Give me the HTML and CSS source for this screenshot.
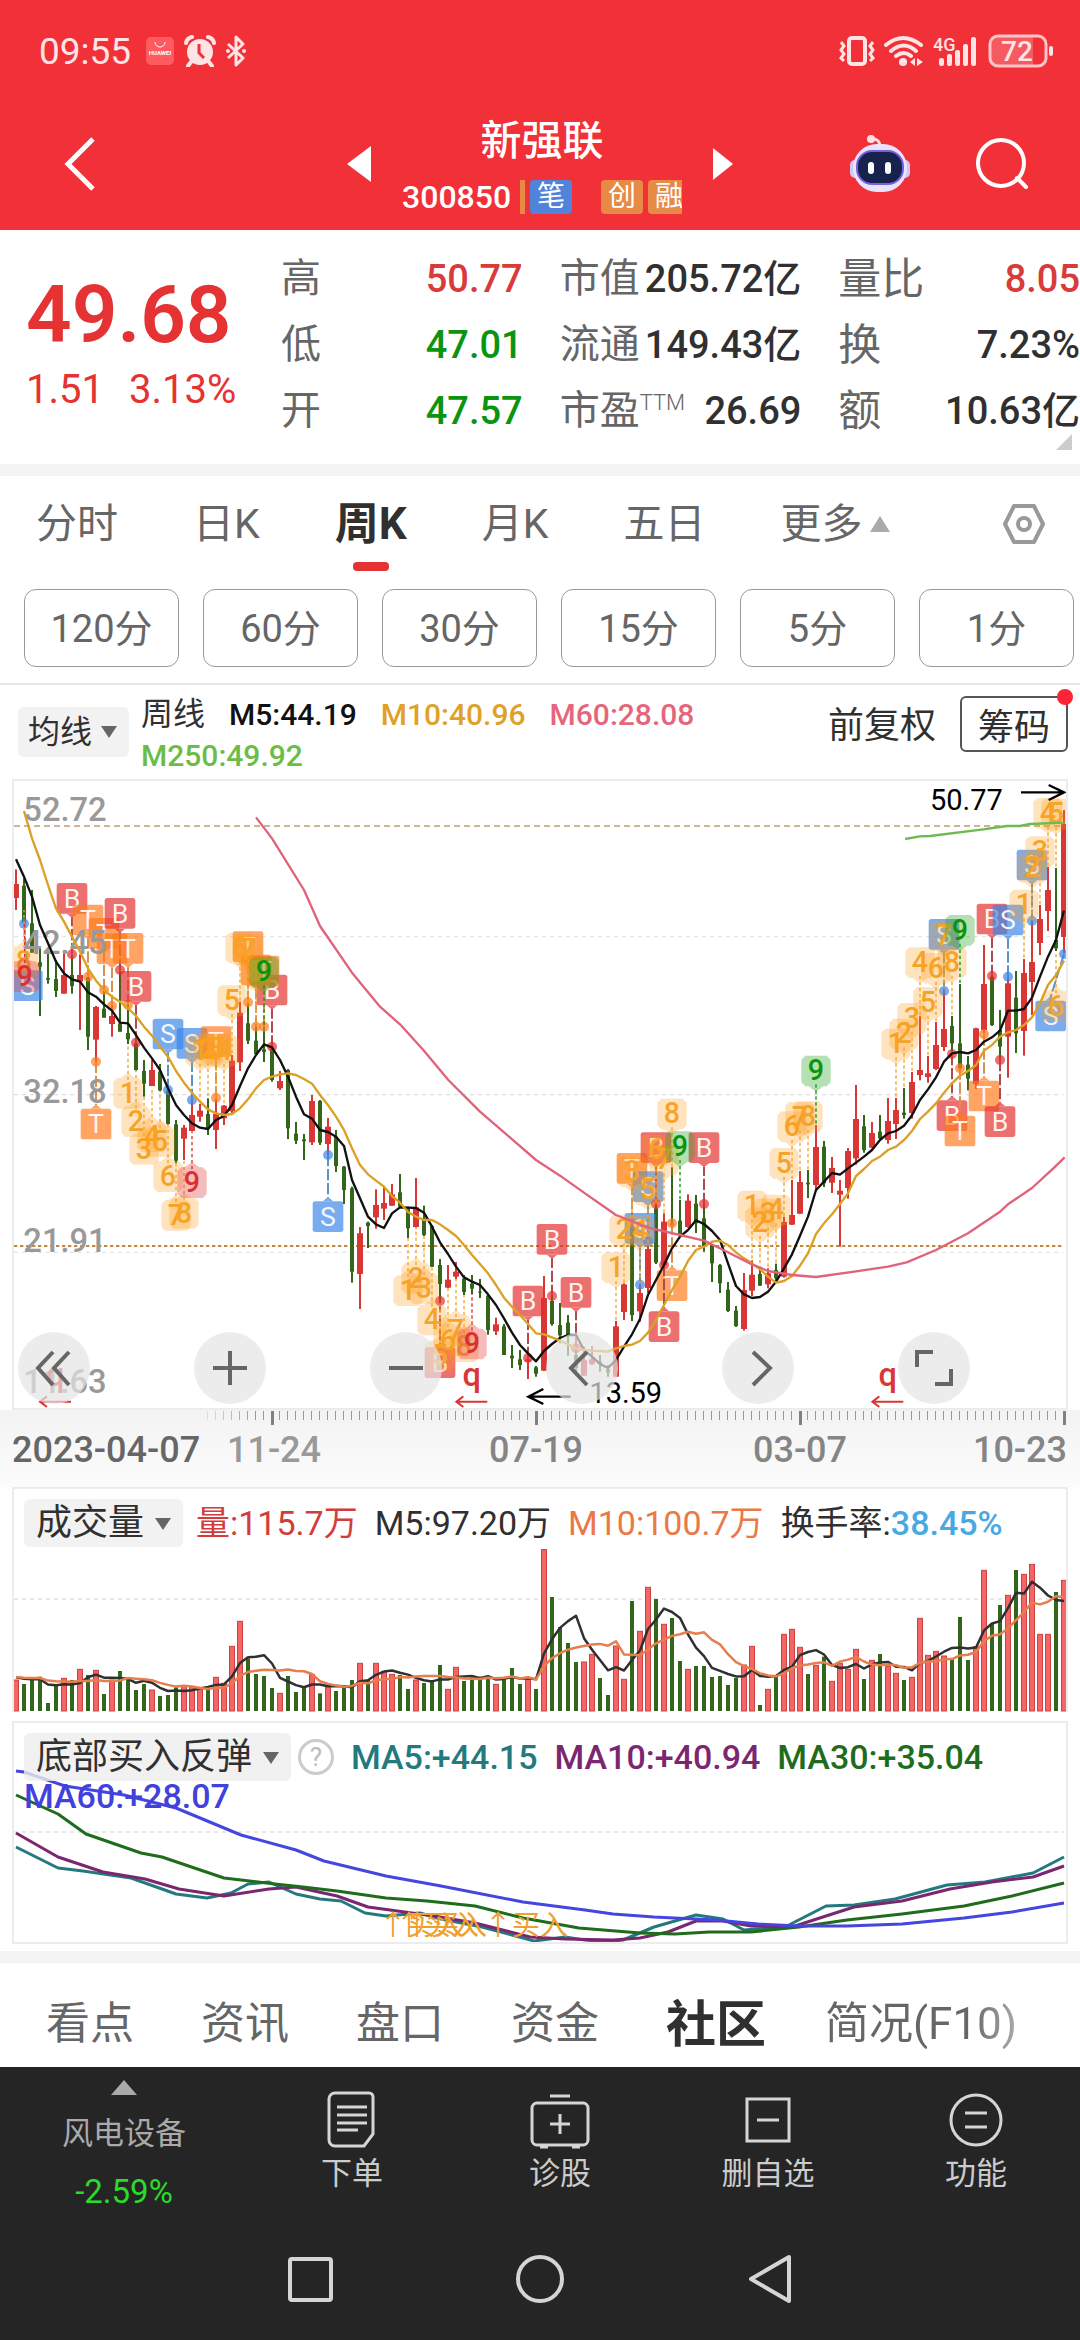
FILE: index.html
```html
<!DOCTYPE html>
<html lang="zh-CN">

<head>
    <meta charset="UTF-8" />
    <meta name="viewport" content="width=device-width, initial-scale=1.0" />
    <meta name="theme-color" content="#f13038" />
    <title>新强联 300850</title>
    <link rel="stylesheet" href="styles.css">
</head>

<body>
    <header class="header">
        <div class="status-bar">
            <span class="clock">09:55</span>
            <svg class="app-icon" width="28" height="28" viewBox="0 0 28 28">
                <rect width="28" height="28" rx="5" fill="#ff5a5f" />
                <path d="M9 5a5 5 0 0 0 10 0" fill="none" stroke="#fff" />
                <text x="14" y="18" font-size="6" font-weight="700" text-anchor="middle" fill="#fff">HUAWEI</text>
            </svg>
            <svg class="alarm-icon" width="32" height="32" viewBox="0 0 32 32">
                <circle cx="16" cy="17" r="13" fill="#ffe4e5" />
                <path d="M2 8q1-5 6-6M30 8q-1-5-6-6M7 27l-3 4M25 27l3 4" stroke="#ffe4e5" stroke-width="4" fill="none" stroke-linecap="round" />
                <path d="M15 9v9l5 5" stroke="#f13038" stroke-width="3" fill="none" />
            </svg>
            <svg class="bt-icon" width="20" height="32" viewBox="0 0 20 32">
                <path d="M2 9l15 14-7 7V2l7 7L2 23" fill="none" stroke="#ffe4e5" stroke-width="3" stroke-linejoin="round" />
                <circle cx="2" cy="16" r="2" fill="#ffe4e5" />
                <circle cx="18" cy="16" r="2" fill="#ffe4e5" />
            </svg>
            <div class="status-right">
                <svg width="36" height="32" viewBox="0 0 36 32" fill="none" stroke="#ffe4e5">
                    <rect x="10" y="3" width="16" height="26" rx="3" stroke-width="4" />
                    <path d="M2 7l3 4-3 4 3 4-3 4 3 3M34 7l-3 4 3 4-3 4 3 4-3 3" stroke-width="3" />
                </svg>
                <svg width="40" height="32" viewBox="0 0 40 32" fill="none" stroke="#ffe4e5" stroke-width="4">
                    <path d="M2 10q17-14 35 0M7 16q13-11 25 0M12 21q8-6 15 0" stroke-linecap="round" />
                    <circle cx="19" cy="27" r="4" fill="#ffe4e5" stroke="none" />
                    <path d="M31 23v8l-5-4zM33 23v8l6-4z" fill="#ffe4e5" stroke="none" />
                </svg>
                <svg width="46" height="32" viewBox="0 0 46 32" fill="#ffe4e5">
                    <text x="0" y="16" font-size="18" font-weight="500">4G</text>
                    <rect x="6" y="23" width="5" height="8" rx="2" />
                    <rect x="14" y="19" width="5" height="12" rx="2" />
                    <rect x="22" y="15" width="5" height="16" rx="2" />
                    <rect x="30" y="9" width="5" height="22" rx="2" />
                    <rect x="38" y="2" width="5" height="29" rx="2" />
                </svg>
                <svg width="66" height="34" viewBox="0 0 66 34">
                    <path d="M8 3h37v28H8a5 5 0 0 1-5-5V8a5 5 0 0 1 5-5z" fill="#f55a61" />
                    <rect x="2" y="2" width="56" height="30" rx="8" fill="none" stroke="#ffc4c7" stroke-width="3" />
                    <rect x="61" y="12" width="4" height="10" rx="2" fill="#ffe4e5" />
                    <text x="29" y="27" font-size="28" font-weight="500" text-anchor="middle" fill="#ffe4e5">72</text>
                </svg>
            </div>
        </div>

        <div class="title-bar">
            <button class="icon-btn back" aria-label="返回">
                <svg width="36" height="60" viewBox="0 0 36 60"><path d="M31 5L6 30l25 25" fill="none" stroke="#fff" stroke-width="5" /></svg>
            </button>
            <div class="stock">
                <button class="icon-btn" aria-label="上一只">
                    <svg width="24" height="36" viewBox="0 0 24 36"><path d="M24 0v36L0 18z" fill="#fff" /></svg>
                </button>
                <div class="stock-title">
                    <h1>新强联</h1>
                    <div class="stock-code">
                        <span>300850</span>
                        <i class="tag-edge"></i>
                        <span class="tag tag-blue">笔</span>
                        <span class="tag tag-next">创</span>
                        <span class="tag">融</span>
                    </div>
                </div>
                <button class="icon-btn" aria-label="下一只">
                    <svg width="20" height="32" viewBox="0 0 20 32"><path d="M0 0v32l20-16z" fill="#fff" /></svg>
                </button>
            </div>
            <div class="title-actions">
                <button class="icon-btn" aria-label="智能助手">
                    <svg width="62" height="60" viewBox="0 0 62 60">
                        <path d="M22 5q9-1 9 8" fill="none" stroke="#ffdfe6" stroke-width="3" />
                        <circle cx="22" cy="5" r="4" fill="#ffdfe6" />
                        <rect x="1" y="26" width="10" height="18" rx="5" fill="#cfc8f5" />
                        <rect x="51" y="26" width="10" height="18" rx="5" fill="#cfc8f5" />
                        <rect x="4" y="10" width="54" height="48" rx="24" fill="#e9e4fb" />
                        <rect x="8" y="17" width="46" height="33" rx="15" fill="#17234d" stroke="#7a5fe0" stroke-width="2" />
                        <rect x="19" y="28" width="6" height="12" rx="3" fill="#fff" />
                        <rect x="36" y="28" width="6" height="12" rx="3" fill="#fff" />
                    </svg>
                </button>
                <button class="icon-btn" aria-label="搜索">
                    <svg width="54" height="54" viewBox="0 0 54 54" fill="none" stroke="#fff" stroke-width="4">
                        <circle cx="26" cy="26" r="23" />
                        <path d="M42 41l9 9" stroke-linecap="round" />
                    </svg>
                </button>
            </div>
        </div>
    </header>

    <main>
        <section class="quote">
            <div class="quote-main">
                <div class="price">49.68</div>
                <div class="change"><span>1.51</span><span>3.13%</span></div>
            </div>
            <dl class="quote-col">
                <div><dt>高</dt><dd class="up">50.77</dd></div>
                <div><dt>低</dt><dd class="down">47.01</dd></div>
                <div><dt>开</dt><dd class="down">47.57</dd></div>
            </dl>
            <dl class="quote-col">
                <div><dt>市值</dt><dd>205.72亿</dd></div>
                <div><dt>流通</dt><dd>149.43亿</dd></div>
                <div><dt>市盈<sup>TTM</sup></dt><dd>26.69</dd></div>
            </dl>
            <dl class="quote-col wide-label">
                <div><dt>量比</dt><dd class="up">8.05</dd></div>
                <div><dt>换</dt><dd>7.23%</dd></div>
                <div><dt>额</dt><dd>10.63亿</dd></div>
            </dl>
        </section>

        <nav class="k-tabs">
            <button>分时</button>
            <button>日K</button>
            <button class="active">周K</button>
            <button>月K</button>
            <button>五日</button>
            <button class="more">更多</button>
            <button class="icon-btn k-setting" aria-label="设置">
                <svg width="44" height="42" viewBox="0 0 44 42" fill="none" stroke="#999" stroke-width="4" stroke-linejoin="round">
                    <path d="M12 3h20l9 18-9 18H12L3 21z" />
                    <circle cx="22" cy="21" r="6" />
                </svg>
            </button>
        </nav>

        <div class="periods">
            <button>120分</button>
            <button>60分</button>
            <button>30分</button>
            <button>15分</button>
            <button>5分</button>
            <button>1分</button>
        </div>

        <div class="ma-bar">
            <span class="picker picker-small"><select aria-label="主图指标"><option>均线</option></select></span>
            <div class="ma-legend">
                <span>周线</span>
                <span class="c-black">M5:44.19</span>
                <span class="c-yellow">M10:40.96</span>
                <span class="c-pink">M60:28.08</span>
                <span class="c-green">M250:49.92</span>
            </div>
            <div class="ma-actions">
                <button>前复权</button>
                <button class="chips">筹码</button>
            </div>
        </div>

        <section class="panel k-panel">
            <svg id="kChart" viewBox="42 33 3156 1881"></svg>
            <div class="k-controls">
                <button aria-label="最早"><svg viewBox="0 0 72 72"><path d="M35 20L20 36l15 17M51 20L36 36l15 17" /></svg></button>
                <button aria-label="放大"><svg viewBox="0 0 72 72"><path d="M36 19v34M19 36h34" /></svg></button>
                <button aria-label="缩小"><svg viewBox="0 0 72 72"><path d="M19 36h34" /></svg></button>
                <button aria-label="左移"><svg viewBox="0 0 72 72"><path d="M41 20L25 36l16 17" /></svg></button>
                <button aria-label="右移"><svg viewBox="0 0 72 72"><path d="M31 20l17 16-17 17" /></svg></button>
                <button aria-label="全屏"><svg viewBox="0 0 72 72"><path d="M19 35V20h16M53 37v15H37" /></svg></button>
            </div>
        </section>
        <svg id="axis" class="axis" viewBox="12 0 1056 77"></svg>

        <section class="panel vol-panel">
            <div class="sub-legend">
                <span class="picker"><select aria-label="副图指标一"><option>成交量</option></select></span>
                <span class="c-red">量:115.7万</span>
                <span>M5:97.20万</span>
                <span class="c-orange">M10:100.7万</span>
                <span>换手率:<b>38.45%</b></span>
            </div>
            <svg id="volChart" viewBox="14 1549 1052 163"></svg>
        </section>

        <section class="panel ma-panel">
            <svg id="maChart" viewBox="14 14 1052 219"></svg>
            <div class="sub-legend">
                <span class="picker"><select aria-label="副图指标二"><option>底部买入反弹</option></select></span>
                <button class="help" aria-label="说明">?</button>
                <span class="c-teal">MA5:+44.15</span>
                <span class="c-purple">MA10:+40.94</span>
                <span class="c-dark-green">MA30:+35.04</span>
                <span class="c-blue">MA60:+28.07</span>
            </div>
        </section>

        <nav class="info-tabs">
            <button>看点</button>
            <button>资讯</button>
            <button>盘口</button>
            <button>资金</button>
            <button class="active">社区</button>
            <button class="fade">简况(F10)</button>
        </nav>
    </main>

    <footer class="footer">
        <div class="actions">
            <button class="industry">
                <span>风电设备</span>
                <span class="industry-rate">-2.59%</span>
            </button>
            <button>
                <svg viewBox="0 0 60 60"><path d="M13 4h34a4 4 0 0 1 4 4v37L42 57H13a6 6 0 0 1-6-6V10a6 6 0 0 1 6-6zM15 18h30M15 26h30M15 34h30M15 41h21" /></svg>
                <span>下单</span>
            </button>
            <button>
                <svg viewBox="0 0 60 60"><rect x="2" y="14" width="56" height="42" rx="5" /><path d="M20 7h20M30 25v20M20 35h20M10 58h8M42 58h8" /></svg>
                <span>诊股</span>
            </button>
            <button>
                <svg viewBox="0 0 60 60"><rect x="9" y="10" width="42" height="42" /><path d="M19 31h22" /></svg>
                <span>删自选</span>
            </button>
            <button>
                <svg viewBox="0 0 60 60"><circle cx="30" cy="31" r="25" /><path d="M19 24h22M19 38h22" /></svg>
                <span>功能</span>
            </button>
        </div>
        <div class="system-nav">
            <button aria-label="最近任务"><svg viewBox="0 0 54 54"><rect x="7" y="7" width="41" height="41" rx="2" /></svg></button>
            <button aria-label="主屏幕"><svg viewBox="0 0 54 54"><circle cx="27" cy="27" r="22" /></svg></button>
            <button aria-label="返回上一级"><svg viewBox="0 0 54 54"><path d="M46 5v44L8 27z" /></svg></button>
        </div>
    </footer>

    <script src="chart.js"></script>
</body>

</html>
```
FILE: styles.css
```css
* {
    box-sizing: border-box;
}

body {
    margin: 0;
    background: #252525;
    color: #303030;
    font-family: Roboto, "Noto Sans CJK SC", sans-serif;
}

main {
    background: #fff;
}

button,
select {
    margin: 0;
    padding: 0;
    border: none;
    background: none;
    color: inherit;
    font: inherit;
}

svg {
    display: block;
}

.icon-btn {
    display: flex;
}

/* header */
.header {
    height: 230px;
    background: #f13038;
    color: #fff;
}

.status-bar {
    display: flex;
    align-items: center;
    height: 102px;
    padding: 0 26px 0 39px;
}

.clock {
    margin-right: 15px;
    color: #ffe4e5;
    font-size: 37px;
}

.alarm-icon,
.bt-icon {
    margin-left: 10px;
}

.status-right {
    display: flex;
    align-items: center;
    gap: 9px;
    margin-left: auto;
}

.title-bar {
    display: grid;
    grid-template-columns: 1fr auto 1fr;
    align-items: center;
    height: 124px;
}

.back {
    margin-left: 62px;
}

.stock {
    display: flex;
    align-items: center;
    gap: 31px;
}

.stock-title {
    width: 280px;
    overflow: hidden;
}

.stock-title h1 {
    margin: 0;
    font-size: 41px;
    font-weight: 500;
    line-height: 66px;
    text-align: center;
}

.stock-code {
    display: flex;
    align-items: center;
    height: 46px;
    font-size: 32px;
    font-weight: 500;
}

.tag-edge {
    flex: none;
    width: 5px;
    height: 34px;
    margin: 0 5px 0 9px;
    background: #e68a45;
}

.tag {
    flex: none;
    width: 42px;
    margin-right: 5px;
    border-radius: 4px;
    background: #e68a45;
    font-size: 28px;
    font-weight: 400;
    line-height: 34px;
    text-align: center;
}

.tag-blue {
    background: #5083d9;
}

.tag-next {
    margin-left: 24px;
}

.title-actions {
    display: flex;
    align-items: center;
    justify-content: flex-end;
    gap: 64px;
    padding-right: 51px;
}

/* quote */
.quote {
    position: relative;
    display: grid;
    grid-template-columns: 218px 1fr 1fr 1fr;
    column-gap: 37px;
    padding: 16px 0 20px 26px;
    border-bottom: 12px solid #f4f4f4;
}

.quote::after {
    content: "";
    position: absolute;
    right: 8px;
    bottom: 14px;
    border: 8px solid #ccc;
    border-top-color: transparent;
    border-left-color: transparent;
}

.quote-main {
    padding-top: 25px;
    color: #e53232;
    white-space: nowrap;
}

.price {
    font-size: 80px;
    font-weight: 600;
    line-height: 88px;
}

.change {
    display: flex;
    gap: 25px;
    font-size: 40px;
    line-height: 62px;
}

.quote-col {
    margin: 0;
    font-size: 38px;
    font-weight: 500;
    line-height: 66px;
}

.quote-col div {
    display: flex;
    justify-content: space-between;
    height: 66px;
    white-space: nowrap;
}

.quote-col dt {
    color: #666;
    font-size: 40px;
    font-weight: 400;
}

.wide-label dt {
    font-size: 43px;
}

.quote-col dd {
    margin: 0;
}

.quote-col sup {
    font-size: 22px;
    font-weight: 300;
    line-height: 0;
    vertical-align: 14px;
}

.up {
    color: #d93a3a;
}

.down {
    color: #0a9410;
}

/* k line tabs */
.k-tabs {
    display: flex;
    gap: 75px;
    height: 113px;
    padding: 24px 34px 0 36px;
    color: #666;
    font-size: 41px;
    line-height: 48px;
    white-space: nowrap;
}

.k-tabs button {
    height: 48px;
}

.k-tabs .active {
    position: relative;
    color: #303030;
    font-size: 44px;
    font-weight: 700;
}

.k-tabs .active::after {
    content: "";
    position: absolute;
    left: 50%;
    bottom: -23px;
    width: 36px;
    height: 9px;
    margin-left: -18px;
    border-radius: 4px;
    background: #e53232;
}

.more::after {
    content: "";
    display: inline-block;
    margin-left: 8px;
    border: 10px solid transparent;
    border-top: none;
    border-bottom: 16px solid #aaa;
    vertical-align: 6px;
}

.k-setting {
    align-items: center;
    margin-left: auto;
}

.periods {
    display: grid;
    grid-template-columns: repeat(6, 1fr);
    gap: 24px;
    padding: 0 6px 16px 24px;
    border-bottom: 2px solid #e8e8e8;
}

.periods button {
    height: 78px;
    padding-bottom: 5px;
    border: 1px solid #999;
    border-radius: 12px;
    color: #666;
    font-size: 38px;
}

.ma-bar {
    display: flex;
    align-items: center;
    height: 94px;
    padding: 0 12px 0 18px;
}

.picker {
    position: relative;
    display: inline-block;
}

.picker select {
    display: block;
    height: 48px;
    padding: 0 38px 0 12px;
    border-radius: 6px;
    background: #f2f2f2;
    font-size: 36px;
    appearance: none;
}

.picker::after {
    content: "";
    position: absolute;
    top: 19px;
    right: 12px;
    border: 8px solid transparent;
    border-top: 12px solid #666;
    border-bottom: none;
}

.picker-small select {
    height: 50px;
    padding-left: 10px;
    padding-right: 36px;
    font-size: 32px;
}

.ma-legend {
    flex: 1;
    display: flex;
    flex-wrap: wrap;
    column-gap: 24px;
    margin-left: 12px;
    padding-top: 5px;
    font-size: 30px;
    font-weight: 500;
    line-height: 41px;
}

.ma-legend span:first-child {
    font-size: 32px;
    font-weight: 400;
}

.ma-actions {
    display: flex;
    align-items: center;
    align-self: flex-start;
    gap: 24px;
    padding-top: 11px;
    font-size: 36px;
}

.ma-actions button {
    padding-bottom: 4px;
}

.chips {
    position: relative;
    width: 108px;
    height: 56px;
    border: 2px solid #555;
    border-radius: 6px;
}

.chips::after {
    content: "";
    position: absolute;
    top: -9px;
    right: -7px;
    width: 16px;
    height: 16px;
    border-radius: 50%;
    background: #ff2336;
}

/* charts */
.panel {
    position: relative;
    margin: 0 12px;
    border: 2px solid #ececec;
}

.panel > svg,
.axis {
    width: 100%;
    height: auto;
}

.k-controls {
    position: absolute;
    left: 4px;
    bottom: 4px;
    display: flex;
    gap: 104px;
}

.k-controls button {
    width: 72px;
    height: 72px;
    border-radius: 50%;
    background: rgba(228, 228, 228, 0.7);
}

.k-controls path {
    fill: none;
    stroke: #666;
    stroke-width: 4;
}

.axis {
    padding: 0 12px;
    background: linear-gradient(#f3f3f3, #fcfcfc);
}

.vol-panel {
    margin-bottom: 9px;
    border-bottom: none;
}

.sub-legend {
    display: flex;
    flex-wrap: wrap;
    align-items: center;
    column-gap: 17px;
    padding: 10px 10px 2px;
    font-size: 34px;
    line-height: 48px;
}

.sub-legend > span {
    font-weight: 500;
}

.sub-legend .picker {
    margin-right: -4px;
    font-weight: 400;
}

.sub-legend b {
    color: #48a9e2;
    font-weight: 500;
}

.vol-panel .sub-legend > span {
    font-weight: 400;
}

.ma-panel {
    display: grid;
    margin-bottom: 7px;
}

.ma-panel > * {
    grid-area: 1 / 1;
}

.ma-panel .sub-legend {
    align-content: flex-start;
    z-index: 1;
}

.ma-panel select {
    background: rgba(238, 238, 238, 0.8);
}

.ma-panel .c-blue {
    line-height: 30px;
}

.help {
    width: 36px;
    height: 36px;
    margin-left: -6px;
    border: 3px solid #ccc;
    border-radius: 50%;
    color: #bbb;
    font-size: 26px;
    line-height: 28px;
}

.c-black {
    color: #111;
}

.c-yellow {
    color: #dfa126;
}

.c-pink {
    color: #e5667a;
}

.c-green {
    color: #6cbc48;
}

.c-red {
    color: #d23c3c;
}

.c-orange {
    color: #ec7845;
}

.c-teal {
    color: #23797d;
}

.c-purple {
    color: #7b2770;
}

.c-dark-green {
    color: #1f6c1c;
}

.c-blue {
    color: #4141dc;
}

/* bottom */
.info-tabs {
    display: flex;
    align-items: center;
    gap: 67px;
    height: 116px;
    padding: 10px 0 0 46px;
    border-top: 12px solid #f4f4f4;
    color: #666;
    font-size: 44px;
    white-space: nowrap;
}

.info-tabs .active {
    margin-right: -8px;
    color: #303030;
    font-size: 50px;
    font-weight: 700;
}

.info-tabs .fade {
    background: linear-gradient(90deg, #666 75%, #aaa);
    background-clip: text;
    color: transparent;
}

.footer {
    background: #252525;
    color: #ccc;
}

.actions {
    display: grid;
    grid-template-columns: 248fr 208fr 208fr 208fr 208fr;
    height: 152px;
    font-size: 31px;
}

.actions button {
    display: flex;
    flex-direction: column;
    align-items: center;
    padding-top: 22px;
    line-height: 50px;
}

.footer svg {
    width: 60px;
    height: 60px;
    fill: none;
    stroke: #d5d5d5;
    stroke-width: 3;
}

.actions .industry {
    padding-top: 13px;
    color: #aaa;
}

.industry::before {
    content: "";
    margin-bottom: 14px;
    border: 13px solid transparent;
    border-top: none;
    border-bottom: 15px solid #aaa;
}

.industry-rate {
    margin-top: 8px;
    color: #2adb2a;
    font-size: 33px;
}

.system-nav {
    display: flex;
    justify-content: center;
    gap: 176px;
    height: 120px;
}

.system-nav button {
    display: flex;
    align-items: center;
}

.footer .system-nav svg {
    width: 54px;
    height: 54px;
    stroke-width: 4;
    stroke-linejoin: round;
}
```
FILE: chart.js
```js
const RED = '#d93636';
const GREEN = '#33651a';

// weekly candles: colour, high, body top, body bottom, low (chart units, y down)
const candles = `
r 298 342 384 420,g 325 347 460 460,g 360 460 548 548,g 537 577 590 738,g 545 624 629 641,g 570 627 663 681,
r 540 615 671 671,g 555 615 648 671,r 553 615 635 780,g 620 622 800 840,r 708 711 809 875,g 660 716 743 743,
r 708 738 762 800,g 602 760 785 785,g 705 789 808 822,g 818 820 900 902,g 870 903 941 980,r 870 900 948 948,
g 882 905 961 963,g 960 962 1062 1064,g 1050 1063 1172 1179,r 1065 1073 1106 1170,r 990 1035 1083 1085,
r 1002 1022 1040 1055,g 985 1032 1075 1095,r 985 1032 1080 1137,r 1005 1007 1045 1065,r 855 872 1024 1030,
r 695 728 877 903,g 700 760 812 822,g 770 812 852 852,g 770 838 846 876,g 830 835 930 935,r 903 933 955 960,
g 897 900 1075 1107,g 1056 1091 1112 1122,g 1092 1108 1114 1170,r 975 993 1117 1125,g 990 993 1118 1125,
r 1044 1070 1122 1155,g 1080 1100 1188 1206,g 1188 1190 1260 1302,g 1250 1255 1505 1538,r 1371 1390 1512 1617,
g 1355 1358 1368 1434,r 1258 1305 1342 1376,r 1252 1299 1316 1350,r 1242 1273 1307 1308,g 1212 1267 1310 1310,
g 1310 1315 1375 1404,r 1224 1312 1371 1373,g 1307 1345 1395 1398,g 1365 1368 1490 1491,g 1467 1485 1542 1593,
r 1485 1529 1553 1555,r 1476 1505 1520 1528,g 1515 1526 1566 1575,g 1515 1541 1556 1572,g 1527 1565 1568 1584,
g 1575 1577 1680 1694,r 1643 1663 1684 1695,g 1662 1669 1755 1755,g 1725 1757 1765 1794,g 1740 1768 1785 1800,
r 1760 1768 1774 1827,g 1788 1792 1811 1820,r 1518 1584 1802 1803,g 1578 1593 1662 1667,g 1599 1665 1696 1720,
g 1635 1658 1695 1757,g 1735 1755 1794 1815,r 1730 1770 1817 1818,r 1728 1768 1782 1785,g 1755 1775 1782 1805,
g 1785 1798 1808 1820,r 1653 1669 1820 1821,r 1540 1543 1626 1650,g 1360 1370 1635 1653,r 1545 1569 1624 1655,
r 1425 1437 1554 1570,g 1302 1315 1478 1482,r 1330 1355 1485 1487,g 1192 1360 1366 1366,g 1290 1352 1395 1396,
r 1273 1292 1371 1373,g 1275 1301 1360 1389,g 1302 1345 1430 1445,g 1425 1425 1480 1536,g 1482 1485 1540 1569,
g 1536 1559 1623 1626,g 1608 1622 1668 1671,r 1509 1560 1677 1682,r 1471 1514 1562 1578,g 1495 1512 1547 1548,
r 1495 1510 1543 1555,g 1481 1500 1525 1535,r 1340 1356 1520 1523,r 1230 1335 1364 1365,r 1203 1236 1331 1332,
g 1200 1238 1243 1284,r 1065 1131 1245 1260,g 1113 1130 1240 1251,r 1161 1194 1238 1269,r 1230 1262 1274 1430,
r 1134 1143 1254 1286,r 945 1047 1165 1184,g 1035 1069 1140 1148,r 1056 1089 1133 1135,g 1035 1085 1105 1107,
r 984 1053 1110 1121,r 984 1020 1062 1107,g 954 1028 1035 1046,r 906 936 1029 1046,r 738 900 915 931,
r 858 910 921 938,r 756 825 897 900,r 660 777 831 843,g 738 768 820 845,g 642 820 895 897,g 858 884 926 961,
r 773 775 942 957,r 525 642 780 790,g 618 620 765 768,g 720 780 830 869,r 621 640 800 923,g 603 683 790 849,
r 567 609 783 857,r 453 576 636 735,r 405 447 519 555,r 291 360 423 483,g 294 510 535 543,r 120 162 501 550`
    .trim().split(',').map(row => row.trim().split(' '));

const ma5 = [
    268, 320, 380, 465, 520, 575, 610, 628, 635, 667, 680, 703, 722, 758, 760, 795, 833, 865, 900, 955,
    1005, 1035, 1060, 1073, 1077, 1050, 1038, 1005, 948, 895, 855, 823, 832, 870, 920, 980, 1033, 1046, 1080, 1086,
    1100, 1128, 1230, 1285, 1340, 1363, 1374, 1330, 1312, 1313, 1314, 1328, 1370, 1417, 1452, 1490, 1522, 1535, 1545, 1573,
    1605, 1645, 1688, 1725, 1750, 1774, 1743, 1722, 1704, 1695, 1695, 1740, 1760, 1782, 1794, 1770, 1730, 1693, 1647, 1575,
    1530, 1485, 1435, 1400, 1380, 1351, 1362, 1383, 1410, 1480, 1548, 1573, 1584, 1581, 1565, 1535, 1495, 1453, 1397, 1340,
    1260, 1235, 1209, 1214, 1195, 1178, 1160, 1140, 1110, 1090, 1083, 1067, 1036, 990, 958, 922, 875, 850, 846, 850,
    840, 815, 802, 782, 722, 722, 717, 683, 620, 560, 510, 422
];
// starts at the second candle
const ma10 = [
    123, 205, 270, 345, 415, 455, 500, 545, 595, 632, 660, 680, 695, 715, 738, 770, 797, 830, 860,
    903, 938, 968, 995, 1018, 1030, 1035, 1032, 1015, 988, 955, 930, 920, 913, 910, 915, 927, 941, 975, 1005,
    1040, 1080, 1135, 1185, 1213, 1232, 1250, 1278, 1298, 1326, 1340, 1350, 1350, 1363, 1380, 1398, 1425, 1455, 1482, 1510,
    1545, 1583, 1610, 1635, 1662, 1690, 1693, 1702, 1712, 1723, 1735, 1740, 1742, 1743, 1745, 1735, 1728, 1724, 1713, 1688,
    1650, 1605, 1560, 1520, 1473, 1440, 1430, 1415, 1412, 1425, 1447, 1465, 1480, 1498, 1520, 1538, 1533, 1518, 1487, 1450,
    1392, 1360, 1333, 1302, 1270, 1218, 1197, 1173, 1160, 1140, 1130, 1110, 1083, 1047, 1025, 1000, 968, 940, 917, 903,
    885, 842, 825, 800, 787, 780, 765, 742, 700, 645, 615, 572
];
const ma60 = '768,142 816,205 912,360 960,468 1056,608 1140,710 1200,763 1270,840 1345,930 1440,1025 1608,1170 1680,1217 1755,1270 1848,1335 1944,1373 2040,1395 2112,1412 2170,1440 2256,1483 2304,1503 2376,1515 2448,1521 2568,1504 2664,1490 2720,1477 2808,1440 2904,1390 3000,1325 3024,1303 3096,1254 3160,1195 3194,1162';
const ma250 = '2715,207 2760,199 2790,198 2950,178 3020,168 3060,168 3090,162 3194,158';

// buy / sell / T signals: letter, badge x, badge y, dot x, dot y
const signals = [
    ['B', 216, 385, 216, 553], ['T', 264, 450, 264, 620], ['T', 312, 490, 312, 660], ['T', 336, 536, 336, 708],
    ['B', 360, 430, 360, 600], ['T', 384, 535, 384, 705], ['B', 408, 649, 408, 818], ['T', 288, 1062, 288, 875],
    ['S', 82, 647, 72, 461], ['S', 504, 792, 504, 960], ['S', 576, 820, 576, 990], ['T', 648, 815, 648, 983],
    ['T', 744, 530, 744, 697], ['B', 816, 660, 816, 830], ['T', 768, 600, 768, 770], ['T', 792, 603, 792, 770],
    ['S', 984, 1340, 984, 1155], ['B', 1320, 1778, 1320, 1593], ['B', 1584, 1593, 1584, 1764],
    ['B', 1656, 1408, 1656, 1578], ['B', 1728, 1567, 1728, 1735], ['T', 1896, 1195, 1896, 1360],
    ['S', 1920, 1375, 1920, 1544], ['S', 1944, 1250, 1944, 1415], ['B', 1968, 1133, 1968, 1302],
    ['B', 2112, 1133, 2112, 1302], ['T', 2016, 1547, 2016, 1360], ['B', 1992, 1670, 1992, 1485],
    ['S', 2832, 493, 2832, 663], ['B', 2976, 447, 2976, 618], ['S', 3024, 450, 3024, 620],
    ['S', 3096, 285, 3096, 453], ['B', 2856, 1037, 2856, 852], ['T', 2880, 1083, 2880, 895],
    ['T', 2952, 978, 2952, 793], ['B', 3000, 1055, 3000, 870], ['S', 3152, 738, 3192, 552]
];

// nine-turn counts: number, x, y, line end y, kind for the 9
const turns = [
    [8, 72, 575, 420], [9, 74, 620, 460, 'low'],
    [1, 384, 970, 822], [2, 408, 1055, 902], [3, 432, 1138, 980], [4, 456, 1100, 950], [5, 480, 1115, 963],
    [6, 504, 1220, 1064], [7, 528, 1336, 1179], [8, 552, 1330, 1170], [9, 576, 1238, 1085, 'low'],
    [1, 600, 842, 1002], [2, 624, 838, 985], [3, 648, 835, 985], [4, 672, 842, 1005], [5, 696, 692, 855],
    [6, 720, 534, 695], [7, 744, 540, 700], [8, 768, 605, 770], [9, 792, 606, 770, 'high'],
    [1, 1224, 1562, 1404], [2, 1248, 1525, 1373], [3, 1272, 1555, 1398], [4, 1296, 1650, 1491], [5, 1320, 1758, 1593],
    [6, 1344, 1712, 1555], [7, 1368, 1682, 1528], [8, 1392, 1730, 1575], [9, 1416, 1722, 1572, 'low'],
    [1, 1848, 1493, 1653], [2, 1872, 1380, 1540], [3, 1896, 1205, 1360], [4, 1920, 1383, 1545], [5, 1944, 1260, 1425],
    [6, 1968, 1140, 1302], [7, 1992, 1170, 1330], [8, 2016, 1032, 1192], [9, 2040, 1130, 1290, 'high'],
    [1, 2256, 1308, 1471], [2, 2280, 1358, 1495], [3, 2304, 1332, 1495], [4, 2328, 1320, 1481], [5, 2352, 1180, 1340],
    [6, 2376, 1070, 1230], [7, 2400, 1042, 1203], [8, 2424, 1040, 1200], [9, 2448, 903, 1065, 'high'],
    [1, 2688, 822, 984], [2, 2712, 792, 954], [3, 2736, 745, 906], [4, 2760, 578, 738], [5, 2784, 697, 858],
    [6, 2808, 595, 756], [7, 2832, 498, 660], [8, 2856, 577, 738], [9, 2880, 481, 642, 'high'],
    [1, 3072, 405, 567], [2, 3096, 293, 453], [3, 3120, 245, 405], [4, 3144, 130, 291], [5, 3168, 132, 294],
    [6, 3168, 710, 550]
];

const x = i => 48 + 24 * i;
const line = (points, color, width) =>
    `<polyline points="${points}" fill="none" stroke="${color}" stroke-width="${width}" stroke-linejoin="round"/>`;
const dash = (y, color, width, pattern) =>
    `<path d="M42 ${y}H3190" stroke="${color}" stroke-width="${width}" stroke-dasharray="${pattern}"/>`;

function drawCandle([color, high, top, bottom, low], i) {
    const fill = color === 'r' ? RED : GREEN;
    const w = color === 'r' ? 18 : 12;
    return `<rect x="${x(i) - 3}" y="${high}" width="6" height="${low - high}" fill="${fill}"/>` +
        `<rect x="${x(i) - w / 2}" y="${top}" width="${w}" height="${bottom - top}" fill="${fill}"/>`;
}

function drawSignal([letter, cx, cy, dx, dy]) {
    const fill = { B: '#e52d2d', S: '#3a86e8', T: '#ff7a1a' }[letter];
    const stem = { B: '#b04a50', S: '#5a94c0', T: '#d99050' }[letter];
    const dir = dy > cy ? 1 : -1;
    const edge = cy + dir * 45;
    return `<path d="M${dx} ${dy}L${cx} ${edge + dir * 12}" stroke="${stem}" stroke-width="6" stroke-dasharray="34 8"/>` +
        `<circle cx="${dx}" cy="${dy}" r="15" fill="${fill}" opacity=".7"/>` +
        `<g fill="${fill}" opacity=".68"><rect x="${cx - 46}" y="${cy - 46}" width="92" height="92" rx="8"/>` +
        `<path d="M${cx - 16} ${edge + dir}h32l-16 ${dir * 13}z"/></g>` +
        `<text x="${cx}" y="${cy + 28}" font-size="80" text-anchor="middle" fill="#fff" fill-opacity=".92">${letter}</text>`;
}

function drawTurn([n, cx, cy, end, kind]) {
    const bg = { high: '#28a528', low: '#e53c3c' }[kind] || '#ff9c14';
    const ink = { high: '#0b950b', low: '#d93030' }[kind] || '#f5a428';
    const dir = end > cy ? 1 : -1;
    const edge = cy + dir * 40;
    return `<path d="M${cx} ${edge}V${end}" stroke="${ink}" stroke-width="4" stroke-dasharray="10 8"/>` +
        `<path d="M${cx - 32} ${cy - 46}h64l12 12v68l-12 12h-64l-12-12v-68zM${cx - 22} ${cy + dir * 46}h44l-22 ${dir * 16}z" fill="${bg}" opacity="${kind ? .35 : .28}"/>` +
        `<text x="${cx}" y="${cy + 28}" font-size="86" font-weight="500" text-anchor="middle" fill="${ink}">${n}</text>`;
}

function drawKLine() {
    let out = dash(168, '#b8a072', 5, '18 12') + dash(500, '#e4e4e4', 4, '12 12') + dash(974, '#dedede', 4, '12 12') +
        dash(1428, '#c08a40', 6, '10 8') + dash(1447, '#e4e4e4', 4, '12 12');
    out += candles.map(drawCandle).join('');
    out += signals.map(drawSignal).join('') + turns.map(drawTurn).join('');
    [['52.72', 153], ['42.45', 553], ['32.18', 1000], ['21.91', 1447], ['11.63', 1869]].forEach(([t, y]) => {
        out += `<text x="70" y="${y}" font-size="98" font-weight="500" fill="#999">${t}</text>`;
    });
    out += line(ma5.map((y, i) => `${x(i)},${y}`).join(' '), '#111', 7);
    out += line(ma10.map((y, i) => `${x(i + 1)},${y}`).join(' '), '#dca025', 7);
    out += line(ma60, '#e0637a', 7) + line(ma250, '#70b950', 7);
    out += '<text x="2790" y="120" font-size="87" fill="#000">50.77</text>' +
        '<path d="M3063 67H3192M3146 45L3192 67L3146 90" fill="none" stroke="#000" stroke-width="7"/>' +
        '<text x="1768" y="1898" font-size="87" fill="#000">13.59</text>' +
        '<path d="M1712 1880H1585M1630 1857L1585 1880L1630 1902" fill="none" stroke="#000" stroke-width="7"/>';
    [120, 1369, 2617].forEach(q => {
        out += `<text x="${q + 46}" y="1848" font-size="98" font-weight="500" text-anchor="middle" fill="${RED}">q</text>` +
            `<path d="M${q + 93} 1895H${q}M${q + 21} 1879L${q} 1895L${q + 21} 1911" fill="none" stroke="${RED}" stroke-width="6"/>`;
    });
    document.getElementById('kChart').innerHTML = out;
}

function drawAxis() {
    let out = '';
    for (let i = 24; i < 132; i++) {
        const major = i % 33 === 32;
        out += `<rect x="${16 + 8 * i - 1}" y="1" width="${major ? 3 : 1}" height="${major ? 14 : 9}" fill="${major ? '#808080' : '#999'}" opacity="${Math.min(1, (i - 22) / 8)}"/>`;
    }
    out += '<g font-size="36" font-weight="500" fill="#858585"><text x="12" y="52" fill="#666">2023-04-07</text>' +
        '<text x="274" y="52" text-anchor="middle" fill="#999">11-24</text><text x="536" y="52" text-anchor="middle">07-19</text>' +
        '<text x="800" y="52" text-anchor="middle">03-07</text><text x="1067" y="52" text-anchor="end">10-23</text></g>';
    document.getElementById('axis').innerHTML = out;
}

const volumes = `r93 g81 g96 g103 g24 g81 r98 g93 r125 g108 r122 g51 r93 g120 g96 g63 g81 r63 g45 g48 g71 r75 r73 r71 g71
r101 r83 r194 r269 g158 g111 g105 g69 r53 g105 g57 g73 r109 g53 r78 g60 g71 g93 r143 g93 r143 r119 r110 g108 g66
r93 g84 g93 g138 r65 r131 g90 g101 g103 g98 r80 g99 g129 g81 r101 g66 r485 g342 g252 g204 g147 r147 r170 g99 g48
r195 r95 g330 r239 r371 g336 r260 g279 g150 r125 g135 g135 g102 g105 g78 g99 r138 r194 g18 r65 g108 r230 r245 r191 g111
r137 g163 r89 r143 r125 r185 g96 r152 g171 r133 r113 g93 r101 r278 r167 r179 r165 g158 g282 g153 r193 r422 g263 g318
r347 g423 r410 r440 r230 r230 g357 r392`.split(/\s+/).map(v => ({ up: v[0] === 'r', size: +v.slice(1) }));

// moving average of the volume, weeks before the first bar count as 103
function average(days) {
    return volumes.map((v, i) => {
        let sum = 0;
        for (let k = i - days + 1; k <= i; k++) sum += k < 0 ? 103 : volumes[k].size;
        return `${16 + 8 * i},${(1711 - sum / days / 3).toFixed(1)}`;
    }).join(' ');
}

function drawVolume() {
    let out = '<path d="M14 1599H1064" stroke="#e8e8e8" stroke-width="2" stroke-dasharray="4 4"/>';
    volumes.forEach((v, i) => {
        const h = v.size / 3;
        out += v.up
            ? `<rect x="${13.5 + 8 * i}" y="${1711 - h}" width="5" height="${h}" fill="#f26666" stroke="#cf4040"/>`
            : `<rect x="${14 + 8 * i}" y="${1711 - h}" width="4" height="${h}" fill="${GREEN}"/>`;
    });
    out += line(average(5), '#303030', 2.5) + line(average(10), '#e67e4d', 2.5);
    document.getElementById('volChart').innerHTML = out;
}

function drawMa() {
    const blue = '16,62 24,63 65,77 124,86 176,99 241,126 296,141 324,152 386,167 441,177 523,193 585,201 613,205 654,208 716,211 758,215 799,217 847,217 902,215 964,209 1012,203 1064,194';
    const green = '16,86 58,105 86,125 141,144 162,148 224,169 275,175 303,178 337,182 386,189 427,192 475,197 523,209 579,219 640,224 675,225 709,223 751,223 799,218 847,211 902,205 964,197 1012,187 1064,174';
    const purple = '16,124 58,148 103,163 145,170 179,180 224,187 269,180 296,178 337,187 368,198 434,207 475,214 530,228 565,230 613,231 640,229 668,223 696,212 723,212 751,217 792,218 826,207 854,198 902,192 950,180 992,173 1033,168 1064,157';
    const teal = '16,138 34,147 58,159 83,162 131,169 176,185 207,189 231,184 248,175 269,173 296,185 320,190 341,192 365,204 386,207 420,204 441,210 482,218 534,232 565,228 585,231 606,233 623,231 654,218 696,206 723,210 744,221 785,218 826,197 854,196 895,190 947,176 985,173 1033,164 1064,148';
    let out = '<path d="M14 123H1064" stroke="#e8e8e8" stroke-width="2" stroke-dasharray="4 4"/>';
    out += line(teal, '#23797d', 3) + line(purple, '#7b2770', 3) + line(green, '#1f6c1c', 3) + line(blue, '#4545e0', 3);
    [379, 395, 403, 484].forEach(tx => {
        out += `<text x="${tx}" y="226" font-size="28" fill="#f0a030">↑买入</text>`;
    });
    document.getElementById('maChart').innerHTML = out;
}

drawKLine();
drawAxis();
drawVolume();
drawMa();
```
